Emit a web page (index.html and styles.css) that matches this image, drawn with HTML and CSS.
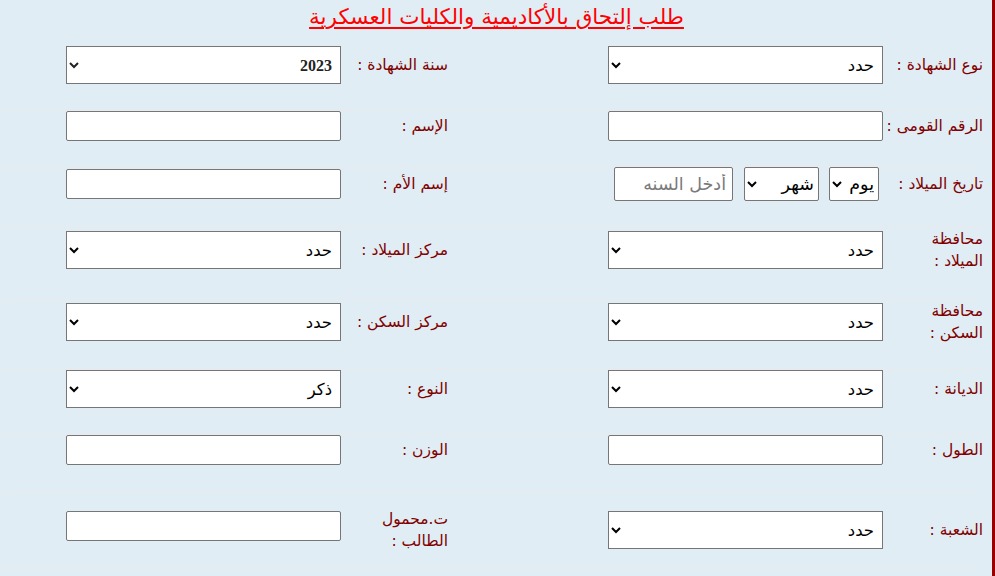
FILE: index.html
```html
<!DOCTYPE html>
<html lang="ar" dir="rtl">
<head>
  <meta charset="utf-8">
  <title>طلب إلتحاق</title>
  <link rel="stylesheet" href="styles.css">
</head>
<body>
  <div class="page">
    <h2 class="title">طلب إلتحاق بالأكاديمية والكليات العسكرية</h2>

    <div class="form">
      <div class="row">
        <label class="lbl">نوع الشهادة :</label>
        <select class="ctl"><option>حدد</option></select>
        <span></span>
        <label class="lbl">سنة الشهادة :</label>
        <select class="ctl year"><option>2023</option></select>
      </div>

      <div class="row">
        <label class="lbl">الرقم القومى :</label>
        <input class="ctl txt" type="text">
        <span></span>
        <label class="lbl">الإسم :</label>
        <input class="ctl txt" type="text">
      </div>

      <div class="row">
        <label class="lbl">تاريخ الميلاد :</label>
        <div class="birth">
          <select class="day"><option>يوم</option></select>
          <select class="month"><option>شهر</option></select>
          <input class="byear" type="text" placeholder="أدخل السنه">
        </div>
        <span></span>
        <label class="lbl">إسم الأم :</label>
        <input class="ctl txt" type="text">
      </div>

      <div class="row">
        <label class="lbl">محافظة<br>الميلاد :</label>
        <select class="ctl"><option>حدد</option></select>
        <span></span>
        <label class="lbl">مركز الميلاد :</label>
        <select class="ctl"><option>حدد</option></select>
      </div>

      <div class="row">
        <label class="lbl">محافظة<br>السكن :</label>
        <select class="ctl"><option>حدد</option></select>
        <span></span>
        <label class="lbl">مركز السكن :</label>
        <select class="ctl"><option>حدد</option></select>
      </div>

      <div class="row">
        <label class="lbl">الديانة :</label>
        <select class="ctl"><option>حدد</option></select>
        <span></span>
        <label class="lbl">النوع :</label>
        <select class="ctl"><option>ذكر</option></select>
      </div>

      <div class="row">
        <label class="lbl">الطول :</label>
        <input class="ctl txt" type="text">
        <span></span>
        <label class="lbl">الوزن :</label>
        <input class="ctl txt" type="text">
      </div>

      <div class="row">
        <label class="lbl">الشعبة :</label>
        <select class="ctl"><option>حدد</option></select>
        <span></span>
        <label class="lbl">ت.محمول<br>الطالب :</label>
        <input class="ctl txt phone" type="text">
      </div>
    </div>
  </div>
</body>
</html>
```

FILE: styles.css
```css
html, body { margin:0; padding:0; background:#e1edf4; }

body { font-family:"DejaVu Sans", "Liberation Sans", sans-serif; }

.page {
  width:994px;
  min-height:576px;
  box-sizing:border-box;
  border-right:3px solid #9b0000;
  background:#e1edf4;
}

.title {
  margin:0;
  height:37px;
  line-height:34px;
  text-align:center;
  font-size:21.5px;
  font-weight:normal;
  color:#ff0000;
  text-decoration:underline;
  text-underline-offset:3px;
}

.form { padding-right:9px; }

.row {
  display:grid;
  grid-template-columns:100px 275px 160px 107px 275px;
  align-items:center;
  padding-bottom:25px;
  border-top:1px solid #e9eaeb;
}
.row:first-child { border-top:0; padding-top:9px; padding-bottom:26px; }
.row:nth-child(3), .row:nth-child(6) { padding-bottom:26px; }
.row:nth-child(4) { padding-bottom:27px; }
.row:last-child { padding-top:17px; padding-bottom:17px; border-bottom:1px solid #e9eaeb; }

.lbl {
  font-size:15.5px;
  line-height:22px;
  color:#800000;
  white-space:nowrap;
}

.ctl {
  width:275px;
  box-sizing:border-box;
  margin:0;
  border:1px solid #767676;
  background:#fff;
  font-family:"DejaVu Sans", sans-serif;
  font-size:16.5px;
  color:#000;
}
select.ctl { height:38px; border-radius:0; padding:0 4px; }
input.txt { height:30px; border-radius:2px; }
input.phone { align-self:start; margin-top:3px; }

select.year {
  font-family:"Liberation Serif", serif;
  font-size:16px;
  font-weight:bold;
  color:#222;
}

.birth {
  display:flex;
  gap:10px;
  padding:0 4px 0 5px;
}
.birth select, .birth input {
  height:34px;
  box-sizing:border-box;
  margin:0;
  border:1px solid #767676;
  border-radius:2px;
  background:#fff;
  font-family:"DejaVu Sans", sans-serif;
  font-size:17.5px;
  color:#000;
}
.day { width:50px; }
.month { width:75px; }
.byear { width:119px; margin-right:1px !important; padding:0 6px; }
.byear::placeholder { color:#7a7a7a; }
```
